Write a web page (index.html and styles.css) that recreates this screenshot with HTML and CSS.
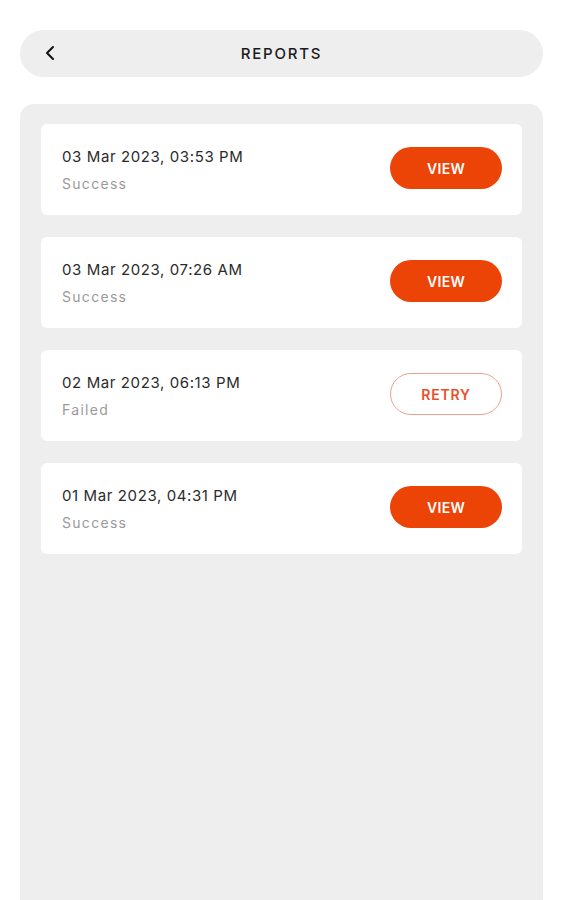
FILE: index.html
```html
<!DOCTYPE html>
<html>
<head>
<meta charset="utf-8">
<link rel="stylesheet" href="styles.css">
</head>
<body>
<div class="page">
  <header class="topbar">
    <span class="back">
      <svg width="12" height="16" viewBox="0 0 12 16"><path d="M9 2 L3 8 L9 14" fill="none" stroke="#111" stroke-width="2" stroke-linecap="round" stroke-linejoin="round"/></svg>
    </span>
    <h1 class="title">REPORTS</h1>
  </header>
  <main class="panel">
    <div class="card">
      <div class="info"><div class="date">03 Mar 2023, 03:53 PM</div><div class="status">Success</div></div>
      <button class="btn">VIEW</button>
    </div>
    <div class="card">
      <div class="info"><div class="date">03 Mar 2023, 07:26 AM</div><div class="status">Success</div></div>
      <button class="btn">VIEW</button>
    </div>
    <div class="card">
      <div class="info"><div class="date">02 Mar 2023, 06:13 PM</div><div class="status">Failed</div></div>
      <button class="btn btn-outline">RETRY</button>
    </div>
    <div class="card">
      <div class="info"><div class="date">01 Mar 2023, 04:31 PM</div><div class="status">Success</div></div>
      <button class="btn">VIEW</button>
    </div>
  </main>
</div>
</body>
</html>
```
FILE: styles.css
```css
html, body { margin: 0; padding: 0; background: #fff; }
body { font-family: "Inter", "Noto Sans", sans-serif; height: 900px; overflow: hidden; }
.page { padding: 30px 20px 0 20px; display: flex; flex-direction: column; gap: 27px; }
.topbar {
  height: 47px; background: #eeeeee; border-radius: 24px;
  display: flex; align-items: center; justify-content: center; position: relative;
}
.back { position: absolute; left: 24px; top: 15px; display: flex; }
.title { margin: 0; font-size: 15px; font-weight: 500; letter-spacing: 1.8px; color: #1a1a1a; }
.panel {
  background: #eeeeee; border-radius: 14px 14px 0 0;
  padding: 20px 21px; height: 800px;
  display: flex; flex-direction: column; gap: 22px;
}
.card {
  background: #fff; border-radius: 6px; height: 91px;
  display: flex; align-items: center; justify-content: space-between;
  padding: 0 20px 0 21px; box-sizing: border-box;
}
.info { display: flex; flex-direction: column; gap: 9px; margin-top: -1px; }
.date { font-size: 15px; color: #2b2b2b; font-weight: 400; letter-spacing: 0.6px; }
.status { font-size: 14px; color: #9a9a9a; letter-spacing: 1.3px; }
.btn {
  width: 112px; height: 42px; border-radius: 21px; border: none; margin-top: -3px;
  background: #ec4306; color: #fff; font-family: "Inter", sans-serif;
  font-size: 14px; font-weight: 600; letter-spacing: 0.3px; cursor: pointer;
}
.btn-outline { background: #fff; color: #e8502a; border: 1px solid #f0a090; font-weight: 600; letter-spacing: 0.8px; }
```
